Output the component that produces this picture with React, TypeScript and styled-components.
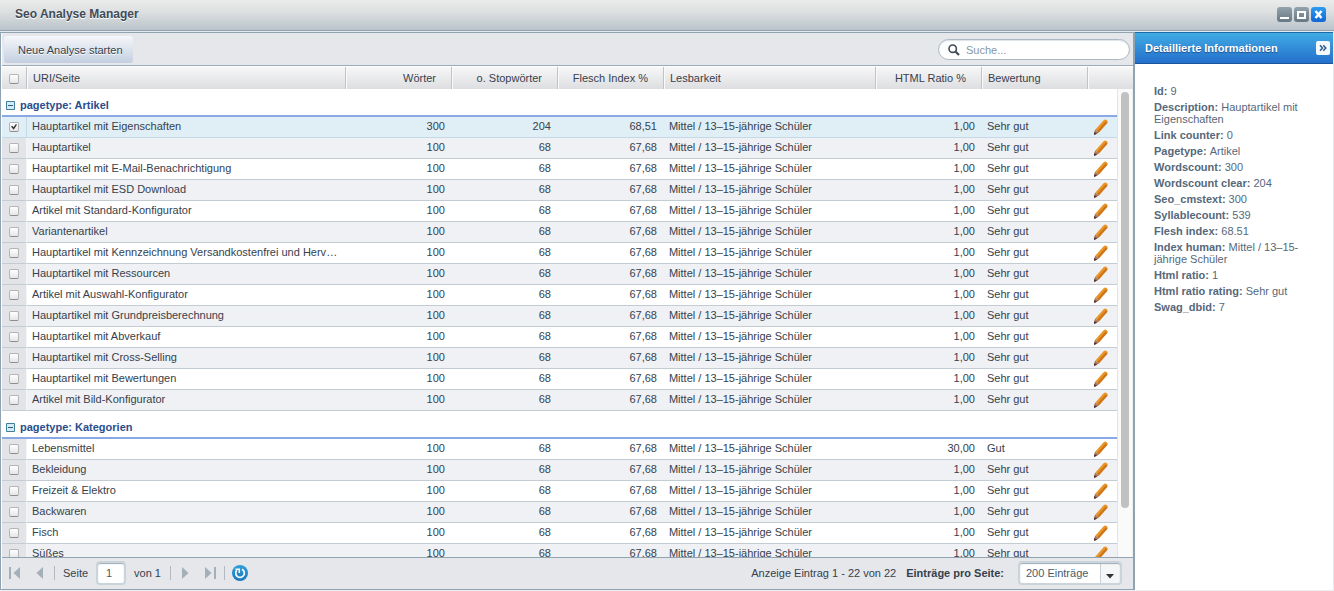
import React, { useState } from "react";
import styled, { createGlobalStyle, css } from "styled-components";

const GlobalStyle = createGlobalStyle`
  *, *::before, *::after { box-sizing: border-box; }
  html, body, #root { height: 100%; margin: 0; }
  body {
    background: #fff;
    color: #36414c;
    font: 11px/12px "Liberation Sans", Arial, sans-serif;
    overflow: hidden;
  }
  button, input, select { font: inherit; color: inherit; margin: 0; }
`;

const Window = styled.div`
  display: flex;
  flex-direction: column;
  height: 100%;
  min-height: 320px;
`;

const TitleBar = styled.header`
  display: flex;
  align-items: center;
  justify-content: space-between;
  height: 31px;
  flex: none;
  padding: 0 8px 2px 15px;
  background: linear-gradient(#ebebeb 0%, #dddfe0 40%, #b9c4ca 100%);
  border-bottom: 1px solid #8fa3b1;
`;

const Title = styled.h1`
  margin: 0;
  font-size: 12px;
  line-height: 14px;
  color: #3f4b57;
  text-shadow: 0 1px 0 #fff;
`;

const WindowTools = styled.div`
  display: flex;
  gap: 2px;
`;

const ToolButton = styled.button<{ $primary?: boolean }>`
  display: block;
  width: 15px;
  height: 15px;
  padding: 0;
  border: 0;
  border-radius: 3px;
  background: ${(p) =>
    p.$primary ? "linear-gradient(#2b9cf2, #1266d3)" : "linear-gradient(#93a3ae, #667884)"};
  svg { display: block; }
`;

const Content = styled.div`
  display: flex;
  flex: 1;
  min-height: 0;
  padding-top: 1px;
  background: #e2e8ed;
  border-bottom: 1px solid #eee;
`;

const Main = styled.main`
  display: flex;
  flex-direction: column;
  flex: 1;
  min-width: 0;
  background: #fff;
  border: 1px solid #8fa3b1;
  border-right-width: 2px;
  padding-left: 1px;
`;

const Toolbar = styled.div`
  display: flex;
  align-items: center;
  justify-content: space-between;
  flex: none;
  height: 33px;
  padding: 1px 3px 0 2px;
  background: #e6e7eb;
  border-bottom: 1px solid #9aabb7;
`;

const ActionButton = styled.button`
  height: 27px;
  padding: 0 10px 0 14px;
  border: 0;
  border-radius: 3px;
  background: linear-gradient(#f5f7fa, #c3cfe0);
  text-shadow: 0 1px 0 #fff;
`;

const SearchField = styled.label`
  display: flex;
  align-items: center;
  gap: 6px;
  width: 192px;
  height: 21px;
  padding: 0 9px;
  background: #fff;
  border: 1px solid #a9b8c2;
  border-radius: 11px;
  box-shadow: inset 0 1px 1px #dde3e8;
  svg { flex: none; }
`;

const SearchInput = styled.input`
  flex: 1;
  min-width: 0;
  padding: 0;
  border: 0;
  outline: 0;
  background: none;
  &::placeholder { color: #8797a3; opacity: 1; }
`;

const Grid = styled.table`
  width: 100%;
  table-layout: fixed;
  border-collapse: separate;
  border-spacing: 0;
`;

const Col = styled.col<{ $w?: number }>`
  ${(p) => p.$w && css`width: ${p.$w}px;`}
`;

const HeadWrap = styled.div`
  flex: none;
  padding-top: 1px;
`;

const HeadCell = styled.th<{ $right?: boolean; $check?: boolean }>`
  height: 22px;
  padding: ${(p) => (p.$check ? "2px 0 0" : p.$right ? "0 15px 0 5px" : "0 5px")};
  text-align: ${(p) => (p.$check ? "center" : p.$right ? "right" : "left")};
  font-weight: normal;
  white-space: nowrap;
  background: linear-gradient(#f7f7f8, #dddee1);
  border-right: 1px solid #c0c3c8;
  border-left: ${(p) => (p.$check ? "0" : "1px solid #fafafa")};
  &:last-child { border-right: 0; }
`;

const ScrollArea = styled.div`
  display: flex;
  flex: 1;
  min-height: 0;
`;

const Viewport = styled.div`
  flex: 1;
  min-width: 0;
  overflow: hidden;
`;

const ScrollTrack = styled.div`
  flex: none;
  width: 16px;
  padding: 3px 3px;
  background: #fafafa;
  border-left: 1px solid #e4e4e4;
  border-right: 1px solid #eee;
`;

const ScrollThumb = styled.div`
  height: 90%;
  border-radius: 4px;
  background: #c1c1c1;
`;

const GroupCell = styled.th`
  height: 28px;
  padding: 6px 4px 0;
  text-align: left;
  color: #2a4d8c;
  background: #fff;
  border-bottom: 2px solid #8aa9e4;
`;

const GroupToggle = styled.button`
  display: flex;
  align-items: center;
  gap: 5px;
  padding: 0;
  border: 0;
  background: none;
  font-weight: bold;
`;

const Row = styled.tr<{ $alt: boolean; $selected: boolean }>`
  background: ${(p) => (p.$selected ? "#e0eff6" : p.$alt ? "#f0f1f5" : "#fff")};
  --mark: ${(p) => (p.$selected ? "#e0eff6" : "#e3e4e8")};
  --edge: ${(p) => (p.$selected ? "#c4d8e6" : "#f4f5f7")};
  --line: ${(p) => (p.$selected ? "#c4d8e6" : "#c3ccd3")};
`;

const Cell = styled.td<{ $right?: boolean; $check?: boolean; $action?: boolean }>`
  height: 21px;
  padding: ${(p) => (p.$check || p.$action ? "0" : "0 7px 2px 5px")};
  text-align: ${(p) => (p.$check ? "center" : p.$right ? "right" : "left")};
  white-space: nowrap;
  overflow: hidden;
  text-overflow: ellipsis;
  border-bottom: 1px solid var(--line);
  ${(p) => p.$check && css`
    background: var(--mark);
    border-right: 1px solid var(--edge);
  `}
`;

const CheckBox = styled.input`
  && { margin: 0 0 0 7px; }
  appearance: none;
  display: block;
  position: relative;
  width: 10px;
  height: 10px;
  border: 1px solid #b4b4b4;
  border-bottom-color: #8e8e8e;
  border-radius: 2px;
  background: linear-gradient(#fff, #e6e6e6);
  &:checked::after {
    content: "";
    position: absolute;
    inset: 1px;
    background: #333;
    clip-path: polygon(0 40%, 18% 28%, 42% 55%, 82% 0, 100% 14%, 44% 96%);
  }
`;

const EditButton = styled.button`
  && { margin-left: 5px; }
  display: block;
  padding: 0;
  border: 0;
  background: none;
  svg { display: block; }
`;

const Pager = styled.footer`
  display: flex;
  align-items: center;
  justify-content: space-between;
  flex: none;
  height: 32px;
  padding: 0 11px 2px 6px;
  background: #e6e7eb;
  border-top: 1px solid #8fa3b1;
`;

const PagerGroup = styled.div<{ $gap: number }>`
  display: flex;
  align-items: center;
  gap: ${(p) => p.$gap}px;
  white-space: nowrap;
`;

const PageButton = styled.button<{ $round?: boolean }>`
  display: block;
  width: 16px;
  height: 16px;
  padding: 0;
  border: 0;
  border-radius: ${(p) => (p.$round ? "8px" : "0")};
  background: ${(p) => (p.$round ? "linear-gradient(#2f9fdb, #1877bd)" : "none")};
  svg { display: block; }
`;

const Divider = styled.span`
  width: 1px;
  height: 14px;
  background: #b3b9bf;
`;

const PageField = styled.label`
  display: flex;
  align-items: center;
  gap: 8px;
  padding: 0 2px 0 1px;
`;

const PageInput = styled.input`
  width: 30px;
  height: 24px;
  padding: 0 8px;
  border: 2px solid #cbd4da;
  border-radius: 4px;
  outline: 0;
  background: #fff;
  color: #475c6a;
  box-shadow: inset 0 1px 1px #9eabb5;
`;

const SelectBox = styled.span`
  display: flex;
  position: relative;
  width: 104px;
  height: 24px;
  border: 2px solid #cbd4da;
  border-radius: 4px;
  background: linear-gradient(90deg, #fff 80px, #c9d0d5 80px, #c9d0d5 81px, #f5f6f7 81px);
  box-shadow: inset 0 1px 1px #9eabb5;
  svg {
    position: absolute;
    right: 6px;
    top: 11px;
    pointer-events: none;
  }
`;

const Select = styled.select`
  appearance: none;
  width: 100%;
  padding: 0 20px 0 6px;
  border: 0;
  outline: 0;
  background: none;
  color: #475c6a;
`;

const SelectLabel = styled.label`
  padding-right: 4px;
  font-weight: bold;
`;

const Aside = styled.aside`
  width: 199px;
  flex: none;
  background: #fff;
  border-right: 1px solid #e8eaec;
`;

const AsideHead = styled.div`
  display: flex;
  align-items: center;
  justify-content: space-between;
  height: 32px;
  padding: 0 3px 0 10px;
  background: linear-gradient(#41abe5, #2370cb);
  border-top: 1px solid #1c6aa6;
  border-bottom: 1px solid #1b559b;
`;

const AsideTitle = styled.h2`
  margin: 0;
  font-size: 11px;
  line-height: 12px;
  font-weight: bold;
  color: #fff;
  white-space: nowrap;
  text-shadow: 0 1px 1px #1d4f8a;
`;

const CollapseButton = styled.button`
  display: block;
  width: 14px;
  height: 14px;
  padding: 0;
  border: 0;
  border-radius: 2px;
  background: #f6f9fc;
  svg { display: block; }
`;

const Details = styled.dl`
  display: flex;
  flex-direction: column;
  gap: 4px;
  margin: 0;
  padding: 21px 30px 0 19px;
  color: #56687a;
`;

const Detail = styled.div`
  dt, dd { display: inline; margin: 0; }
  dt { font-weight: bold; }
`;

const Pencil = () => (
  <svg width="16" height="16" viewBox="0 0 16 16">
    <path d="M2.400 10.600 10.600 1.200Q12 0 13.600 1 15.300 2.300 14.400 3.800L5.800 13.400Z" fill="#e8952a" />
    <path d="M4.200 12 12.800 2.300 14.400 3.800 5.800 13.400Z" fill="#cf7517" />
    <path d="M2.400 10.600 5.800 13.400 4.400 14.600 1 15.900 1.400 12.400Z" fill="#a87962" />
    <path d="M1.300 13 4 14.800 1 15.900Z" fill="#4b3030" />
  </svg>
);

const PageArrow = ({ dir, bar }: { dir: "left" | "right"; bar?: boolean }) => (
  <svg width="16" height="16" viewBox="0 0 16 16">
    <g transform={dir === "right" ? "matrix(-1 0 0 1 16 0)" : undefined} fill="#a3afb9">
      <path d="M12 2v12L5.500 8Z" />
      {bar && <path d="M1 2h2v12H1Z" />}
    </g>
  </svg>
);

type Page = [string, string, string, string, string, string];

const page = (name: string): Page => [name, "100", "68", "67,68", "1,00", "Sehr gut"];

const groups: { name: string; pages: Page[] }[] = [
  {
    name: "Artikel",
    pages: [
      ["Hauptartikel mit Eigenschaften", "300", "204", "68,51", "1,00", "Sehr gut"],
      ...[
        "Hauptartikel",
        "Hauptartikel mit E-Mail-Benachrichtigung",
        "Hauptartikel mit ESD Download",
        "Artikel mit Standard-Konfigurator",
        "Variantenartikel",
        "Hauptartikel mit Kennzeichnung Versandkostenfrei und Hervorhebung",
        "Hauptartikel mit Ressourcen",
        "Artikel mit Auswahl-Konfigurator",
        "Hauptartikel mit Grundpreisberechnung",
        "Hauptartikel mit Abverkauf",
        "Hauptartikel mit Cross-Selling",
        "Hauptartikel mit Bewertungen",
        "Artikel mit Bild-Konfigurator",
      ].map(page),
    ],
  },
  {
    name: "Kategorien",
    pages: [
      ["Lebensmittel", "100", "68", "67,68", "30,00", "Gut"],
      ...["Bekleidung", "Freizeit & Elektro", "Backwaren", "Fisch", "Süßes"].map(page),
    ],
  },
];

const details = [
  ["Id", "9"],
  ["Description", "Hauptartikel mit Eigenschaften"],
  ["Link counter", "0"],
  ["Pagetype", "Artikel"],
  ["Wordscount", "300"],
  ["Wordscount clear", "204"],
  ["Seo_cmstext", "300"],
  ["Syllablecount", "539"],
  ["Flesh index", "68.51"],
  ["Index human", "Mittel / 13–15-jährige Schüler"],
  ["Html ratio", "1"],
  ["Html ratio rating", "Sehr gut"],
  ["Swag_dbid", "7"],
];

const Columns = ({ last }: { last: number }) => (
  <colgroup>
    <Col $w={25} />
    <Col />
    <Col $w={106} />
    <Col $w={106} />
    <Col $w={106} />
    <Col $w={212} />
    <Col $w={106} />
    <Col $w={106} />
    <Col $w={last} />
  </colgroup>
);

export default function App() {
  const [selected, setSelected] = useState<string[]>(["Hauptartikel mit Eigenschaften"]);
  const toggle = (name: string) =>
    setSelected((s) => (s.includes(name) ? s.filter((n) => n !== name) : [...s, name]));

  return (
    <Window>
      <GlobalStyle />
      <TitleBar>
        <Title>Seo Analyse Manager</Title>
        <WindowTools>
          <ToolButton aria-label="Minimieren">
            <svg width="15" height="15"><path d="M3 10h9v2H3Z" fill="#fff" /></svg>
          </ToolButton>
          <ToolButton aria-label="Maximieren">
            <svg width="15" height="15">
              <path d="M3 4h9v8H3ZM5 6v4h5V6Z" fill="#fff" fillRule="evenodd" />
            </svg>
          </ToolButton>
          <ToolButton $primary aria-label="Schließen">
            <svg width="15" height="15">
              <path d="m4.500 4 6 7M10.500 4l-6 7" stroke="#fff" strokeWidth="2.600" />
            </svg>
          </ToolButton>
        </WindowTools>
      </TitleBar>
      <Content>
        <Main>
          <Toolbar>
            <ActionButton>Neue Analyse starten</ActionButton>
            <SearchField>
              <svg width="12" height="12" viewBox="0 0 12 12" fill="none" stroke="#3f4b57">
                <circle cx="4.700" cy="4.700" r="3.700" strokeWidth="1.600" />
                <path d="m7.500 7.500 3.500 3.500" strokeWidth="2.200" />
              </svg>
              <SearchInput placeholder="Suche..." aria-label="Suche" />
            </SearchField>
          </Toolbar>
          <HeadWrap>
            <Grid>
              <Columns last={45} />
              <thead>
                <tr>
                  <HeadCell $check><CheckBox type="checkbox" aria-label="Alle auswählen" /></HeadCell>
                  <HeadCell>URI/Seite</HeadCell>
                  <HeadCell $right>Wörter</HeadCell>
                  <HeadCell $right>o. Stopwörter</HeadCell>
                  <HeadCell $right>Flesch Index %</HeadCell>
                  <HeadCell>Lesbarkeit</HeadCell>
                  <HeadCell $right>HTML Ratio %</HeadCell>
                  <HeadCell>Bewertung</HeadCell>
                  <HeadCell />
                </tr>
              </thead>
            </Grid>
          </HeadWrap>
          <ScrollArea>
            <Viewport>
              <Grid>
                <Columns last={29} />
                {groups.map((group) => (
                  <tbody key={group.name}>
                    <tr>
                      <GroupCell colSpan={9}>
                        <GroupToggle>
                          <svg width="9" height="9">
                            <path d="M.5.5h8v8h-8Z" fill="#d5ebf3" stroke="#3f7f99" />
                            <path d="M2 4h5v1H2Z" fill="#2c5f7a" />
                          </svg>
                          pagetype: {group.name}
                        </GroupToggle>
                      </GroupCell>
                    </tr>
                    {group.pages.map(([name, words, clear, flesch, ratio, rating], i) => (
                      <Row key={name} $alt={i % 2 === 1} $selected={selected.includes(name)}>
                        <Cell $check>
                          <CheckBox
                            type="checkbox"
                            aria-label={name}
                            checked={selected.includes(name)}
                            onChange={() => toggle(name)}
                          />
                        </Cell>
                        <Cell>{name}</Cell>
                        <Cell $right>{words}</Cell>
                        <Cell $right>{clear}</Cell>
                        <Cell $right>{flesch}</Cell>
                        <Cell>Mittel / 13–15-jährige Schüler</Cell>
                        <Cell $right>{ratio}</Cell>
                        <Cell>{rating}</Cell>
                        <Cell $action>
                          <EditButton aria-label={`${name} bearbeiten`}><Pencil /></EditButton>
                        </Cell>
                      </Row>
                    ))}
                  </tbody>
                ))}
              </Grid>
            </Viewport>
            <ScrollTrack><ScrollThumb /></ScrollTrack>
          </ScrollArea>
          <Pager>
            <PagerGroup $gap={7}>
              <PageButton aria-label="Erste Seite"><PageArrow dir="left" bar /></PageButton>
              <PageButton aria-label="Vorherige Seite"><PageArrow dir="left" /></PageButton>
              <Divider />
              <PageField>
                Seite
                <PageInput defaultValue="1" />
                von 1
              </PageField>
              <Divider />
              <PageButton aria-label="Nächste Seite"><PageArrow dir="right" /></PageButton>
              <PageButton aria-label="Letzte Seite"><PageArrow dir="right" bar /></PageButton>
              <Divider />
              <PageButton $round aria-label="Aktualisieren">
                <svg width="16" height="16" fill="none" stroke="#fff">
                  <path d="M10 4.300A4.300 4.300 0 1 1 4.800 5.300" strokeWidth="1.700" />
                  <path d="M3.500 4.200h3.800v3.800" strokeWidth="1.500" />
                </svg>
              </PageButton>
            </PagerGroup>
            <PagerGroup $gap={10}>
              <span>Anzeige Eintrag 1 - 22 von 22</span>
              <SelectLabel htmlFor="page-size">Einträge pro Seite:</SelectLabel>
              <SelectBox>
                <Select id="page-size" defaultValue="200">
                  <option value="200">200 Einträge</option>
                </Select>
                <svg width="8" height="5"><path d="M0 0h8L4 4.500Z" fill="#333" /></svg>
              </SelectBox>
            </PagerGroup>
          </Pager>
        </Main>
        <Aside>
          <AsideHead>
            <AsideTitle>Detaillierte Informationen</AsideTitle>
            <CollapseButton aria-label="Einklappen">
              <svg width="14" height="14" fill="none" stroke="#2a5a8f" strokeWidth="1.500">
                <path d="m4 4.200 2.500 2.800L4 9.800M7.300 4.200 9.800 7 7.300 9.800" />
              </svg>
            </CollapseButton>
          </AsideHead>
          <Details>
            {details.map(([term, value]) => (
              <Detail key={term}>
                <dt>{term}:</dt> <dd>{value}</dd>
              </Detail>
            ))}
          </Details>
        </Aside>
      </Content>
    </Window>
  );
}
